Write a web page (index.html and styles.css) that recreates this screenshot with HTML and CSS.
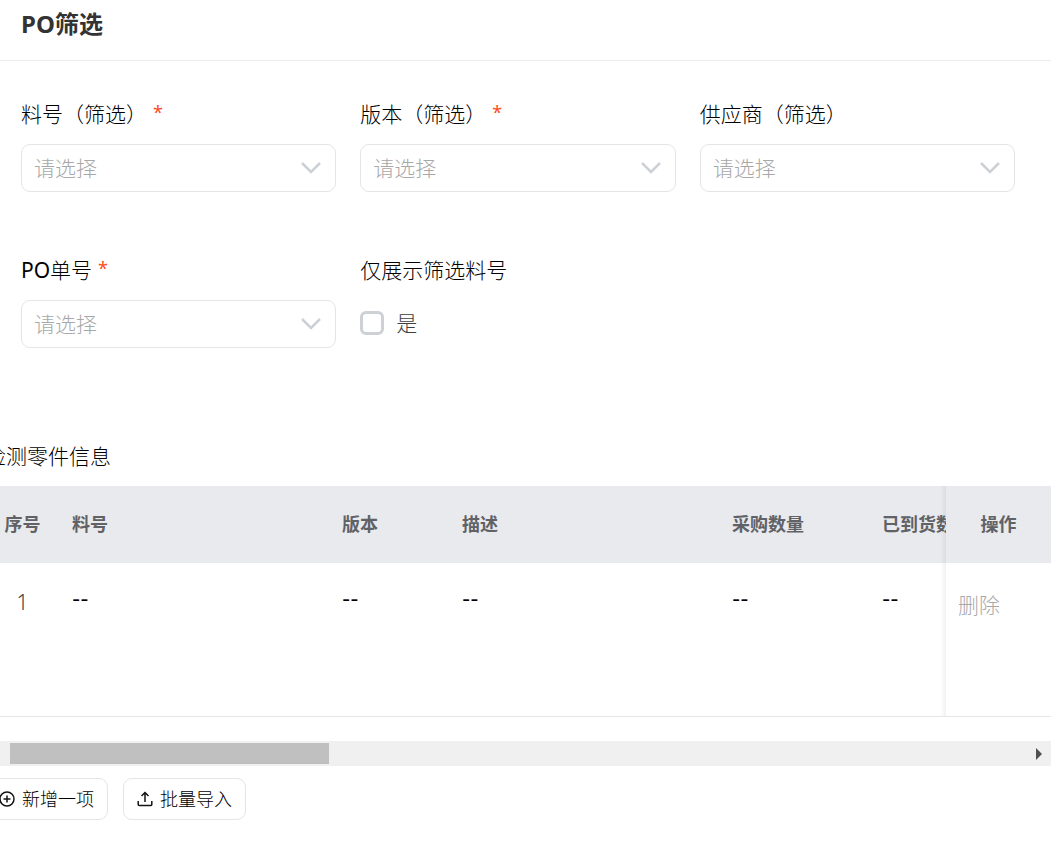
FILE: index.html
```html
<!DOCTYPE html>
<html lang="zh-CN">
<head>
<meta charset="utf-8">
<title>PO筛选</title>
<link rel="stylesheet" href="styles.css">
</head>
<body>
<header class="page-header"><h1 class="page-title">PO筛选</h1></header>
<main>
  <form class="filters">
    <div class="field">
      <label class="field-label" for="part">料号（筛选）<span class="required">*</span></label>
      <div class="select-box">
        <select class="select" id="part"><option>请选择</option></select>
        <svg class="chevron" viewBox="0 0 20 12"><path d="M1 1l9 9 9-9"/></svg>
      </div>
    </div>
    <div class="field">
      <label class="field-label" for="version">版本（筛选）<span class="required">*</span></label>
      <div class="select-box">
        <select class="select" id="version"><option>请选择</option></select>
        <svg class="chevron" viewBox="0 0 20 12"><path d="M1 1l9 9 9-9"/></svg>
      </div>
    </div>
    <div class="field">
      <label class="field-label" for="supplier">供应商（筛选）</label>
      <div class="select-box">
        <select class="select" id="supplier"><option>请选择</option></select>
        <svg class="chevron" viewBox="0 0 20 12"><path d="M1 1l9 9 9-9"/></svg>
      </div>
    </div>
    <div class="field">
      <label class="field-label" for="po"><span class="latin">PO</span>单号<span class="required">*</span></label>
      <div class="select-box">
        <select class="select" id="po"><option>请选择</option></select>
        <svg class="chevron" viewBox="0 0 20 12"><path d="M1 1l9 9 9-9"/></svg>
      </div>
    </div>
    <div class="field">
      <span class="field-label" id="only-label">仅展示筛选料号</span>
      <label class="check"><input class="check-input" type="checkbox" aria-describedby="only-label">是</label>
    </div>
  </form>

  <section class="parts">
    <h2 class="parts-title">检测零件信息</h2>
    <div class="table-view">
      <table class="table">
        <colgroup>
          <col class="col-index"><col class="col-wide"><col class="col-narrow"><col class="col-wide"><col class="col-number"><col class="col-number"><col class="col-action">
        </colgroup>
        <thead>
          <tr><th class="center">序号</th><th>料号</th><th>版本</th><th>描述</th><th>采购数量</th><th>已到货数量</th><th class="center pinned">操作</th></tr>
        </thead>
        <tbody>
          <tr><td class="center index">1</td><td class="empty">--</td><td class="empty">--</td><td class="empty">--</td><td class="empty">--</td><td class="empty">--</td><td class="pinned"><button class="delete" type="button" disabled>删除</button></td></tr>
        </tbody>
      </table>
    </div>
    <div class="scrollbar">
      <div class="scroll-track"><div class="scroll-thumb"></div></div>
      <svg class="scroll-arrow" viewBox="0 0 25 25"><path d="M10 7v12l6-6z"/></svg>
    </div>
    <div class="actions">
      <button class="button" type="button">
        <svg class="icon" viewBox="0 0 16 16"><circle cx="8" cy="8" r="7"/><path d="M8 4.5v7M4.5 8h7"/></svg>新增一项
      </button>
      <button class="button" type="button">
        <svg class="icon" viewBox="0 0 16 16"><path d="M8 11V1.500M4.500 5L8 1.500 11.500 5M1.200 10v3.500q0 1 1 1h11.600q1 0 1-1V10"/></svg>批量导入
      </button>
    </div>
  </section>
</main>
</body>
</html>
```
FILE: styles.css
```css
* {
  box-sizing: border-box;
}

body {
  margin: 0;
  background: #fff;
  color: #000;
  font-family: "Noto Sans", "Noto Sans CJK SC", sans-serif;
  font-size: 21px;
  font-weight: 300;
  line-height: 32px;
  overflow-x: hidden;
}

button,
select {
  font: inherit;
}

.page-header {
  padding: 8px 21px 20px;
  border-bottom: 1px solid #ededed;
}

.page-title {
  margin: 0;
  color: #333;
  font-size: 24px;
  font-weight: 700;
  line-height: 32px;
}

.filters {
  display: grid;
  grid-template-columns: repeat(3, 1fr);
  gap: 60px 24px;
  padding: 35px 36px 0 21px;
}

.field {
  display: flex;
  flex-direction: column;
  gap: 12px;
  height: 96px;
}

.field-label {
  display: flex;
  height: 36px;
  line-height: 36px;
}

.latin {
  font-weight: 400;
}

.required {
  margin-left: 6px;
  color: #ff4d1c;
  font-size: 18px;
  font-weight: 400;
  line-height: 32px;
}

.select-box {
  position: relative;
}

.select {
  display: block;
  width: 100%;
  height: 48px;
  padding: 0 48px 0 12px;
  border: 1px solid #e4e5e7;
  border-radius: 9px;
  background: #fff;
  color: #a8a8a8;
  appearance: none;
}

.chevron {
  position: absolute;
  top: 18px;
  right: 15px;
  width: 20px;
  height: 12px;
  fill: none;
  stroke: #cdd0d4;
  stroke-width: 2.5;
  pointer-events: none;
}

.check {
  display: flex;
  align-items: center;
  gap: 12px;
  height: 46px;
  color: #404040;
}

.check-input {
  width: 24px;
  height: 24px;
  margin: 0;
  border: 3px solid #cdd0d4;
  border-radius: 6px;
  background: #fff;
  appearance: none;
}

.check-input:checked {
  background: #cdd0d4;
}

.parts {
  margin: 92px 0 0 -15px;
}

.parts-title {
  margin: 0 0 14px;
  font-size: 21px;
  font-weight: 300;
  line-height: 32px;
}

.table-view {
  overflow: hidden;
}

.table {
  width: 1140px;
  min-width: 100%;
  table-layout: fixed;
  border-collapse: separate;
  border-spacing: 0;
}

.col-index {
  width: 75px;
}

.col-wide {
  width: 270px;
}

.col-narrow {
  width: 120px;
}

.col-number {
  width: 150px;
}

.col-action {
  width: 105px;
}

.table th {
  height: 77px;
  padding: 0 12px 2px;
  background: #e9eaee;
  color: #606266;
  font-size: 18px;
  font-weight: 700;
  line-height: 24px;
  text-align: left;
}

.table td {
  height: 154px;
  padding: 23px 12px;
  border-bottom: 1px solid #e6e6e6;
  background: #fff;
  vertical-align: top;
}

.table .empty {
  padding-top: 21px;
  font-family: Inter, sans-serif;
  font-size: 18px;
  font-weight: 500;
}

.table .center {
  text-align: center;
}

.table .index {
  color: #404040;
}

.table .pinned {
  position: sticky;
  right: 0;
}

.pinned::before {
  content: "";
  position: absolute;
  top: 0;
  bottom: 0;
  left: -6px;
  width: 6px;
  background: linear-gradient(to right, transparent, rgba(0, 0, 0, 0.05));
}

.delete {
  padding: 3px 0;
  border: 0;
  background: none;
  color: #a8a8a8;
}

.scrollbar {
  display: flex;
  height: 25px;
  margin-top: 24px;
  padding-left: 25px;
  background: #f0f0f0;
}

.scroll-track {
  flex: 1;
  padding: 2px 0;
}

.scroll-thumb {
  width: 319px;
  height: 21px;
  background: #c0c0c0;
}

.scroll-arrow {
  width: 25px;
  height: 25px;
  fill: #505050;
}

.actions {
  display: flex;
  gap: 15px;
  padding: 12px 0 47px;
}

.button {
  display: flex;
  align-items: center;
  gap: 7px;
  height: 42px;
  padding: 0 13px;
  border: 1px solid #e4e5e7;
  border-radius: 9px;
  background: #fff;
  color: #000;
  font-size: 18px;
}

.icon {
  width: 16px;
  height: 16px;
  fill: none;
  stroke: #141414;
  stroke-width: 1.5;
}
```
